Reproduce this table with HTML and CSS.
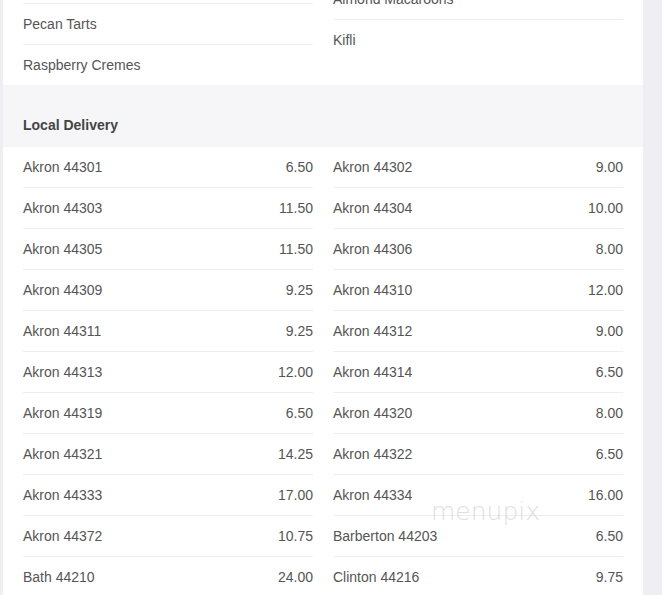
FILE: index.html
```html
<!DOCTYPE html>
<html lang="en">
<head>
<meta charset="utf-8">
<title>Menu</title>
<link rel="stylesheet" href="styles.css">
</head>
<body>
<div class="page">
  <div class="card">
    <section class="section section-top">
      <div class="items">
        <ul class="col">
          <li class="row"><span class="name">Nut Horns</span></li>
          <li class="row"><span class="name">Pecan Tarts</span></li>
          <li class="row"><span class="name">Raspberry Cremes</span></li>
        </ul>
        <ul class="col col-offset">
          <li class="row"><span class="name">Almond Macaroons</span></li>
          <li class="row"><span class="name">Kifli</span></li>
        </ul>
      </div>
    </section>
    <h2 class="section-title">Local Delivery</h2>
    <section class="section">
      <div class="items">
        <ul class="col">
          <li class="row"><span class="name">Akron 44301</span><span class="price">6.50</span></li>
          <li class="row"><span class="name">Akron 44303</span><span class="price">11.50</span></li>
          <li class="row"><span class="name">Akron 44305</span><span class="price">11.50</span></li>
          <li class="row"><span class="name">Akron 44309</span><span class="price">9.25</span></li>
          <li class="row"><span class="name">Akron 44311</span><span class="price">9.25</span></li>
          <li class="row"><span class="name">Akron 44313</span><span class="price">12.00</span></li>
          <li class="row"><span class="name">Akron 44319</span><span class="price">6.50</span></li>
          <li class="row"><span class="name">Akron 44321</span><span class="price">14.25</span></li>
          <li class="row"><span class="name">Akron 44333</span><span class="price">17.00</span></li>
          <li class="row"><span class="name">Akron 44372</span><span class="price">10.75</span></li>
          <li class="row"><span class="name">Bath 44210</span><span class="price">24.00</span></li>
        </ul>
        <ul class="col">
          <li class="row"><span class="name">Akron 44302</span><span class="price">9.00</span></li>
          <li class="row"><span class="name">Akron 44304</span><span class="price">10.00</span></li>
          <li class="row"><span class="name">Akron 44306</span><span class="price">8.00</span></li>
          <li class="row"><span class="name">Akron 44310</span><span class="price">12.00</span></li>
          <li class="row"><span class="name">Akron 44312</span><span class="price">9.00</span></li>
          <li class="row"><span class="name">Akron 44314</span><span class="price">6.50</span></li>
          <li class="row"><span class="name">Akron 44320</span><span class="price">8.00</span></li>
          <li class="row"><span class="name">Akron 44322</span><span class="price">6.50</span></li>
          <li class="row"><span class="name">Akron 44334</span><span class="price">16.00</span></li>
          <li class="row"><span class="name">Barberton 44203</span><span class="price">6.50</span></li>
          <li class="row"><span class="name">Clinton 44216</span><span class="price">9.75</span></li>
        </ul>
      </div>
    </section>
    <div class="watermark">menupix</div>
  </div>
</div>
</body>
</html>
```

FILE: styles.css
```css
html, body {
  margin: 0;
  padding: 0;
  background: #eeeef3;
  height: 100%;
  overflow: hidden;
}
body {
  font-family: "Liberation Sans", Arial, sans-serif;
  font-size: 14px;
  color: #555;
}
.page {
  padding-left: 3px;
}
.card {
  position: relative;
  width: 640px;
  background: #fff;
}
.section-top {
  margin-top: -37px;
}
.items {
  display: grid;
  grid-template-columns: 290px 290px;
  column-gap: 20px;
  padding: 0 20px;
  align-items: start;
}
.col {
  list-style: none;
  margin: 0;
  padding: 0;
}
.col-offset {
  padding-top: 16px;
}
.row {
  display: flex;
  justify-content: space-between;
  align-items: center;
  height: 40px;
  border-bottom: 1px solid #eeeeef;
  line-height: 17px;
}
.row:last-child {
  border-bottom: none;
  height: 41px;
}
.section-top .row:last-child {
  height: 40px;
}
.section-title {
  margin: 0;
  background: #f6f6f8;
  padding: 32px 20px 13px;
  font-size: 14px;
  line-height: 17px;
  font-weight: bold;
  color: #444;
}
.watermark {
  position: absolute;
  left: 428px;
  top: 534px;
  font-family: "DejaVu Sans", sans-serif;
  font-weight: 200;
  font-size: 25px;
  line-height: 30px;
  color: rgba(190, 190, 190, 0.5);
  pointer-events: none;
}
```
